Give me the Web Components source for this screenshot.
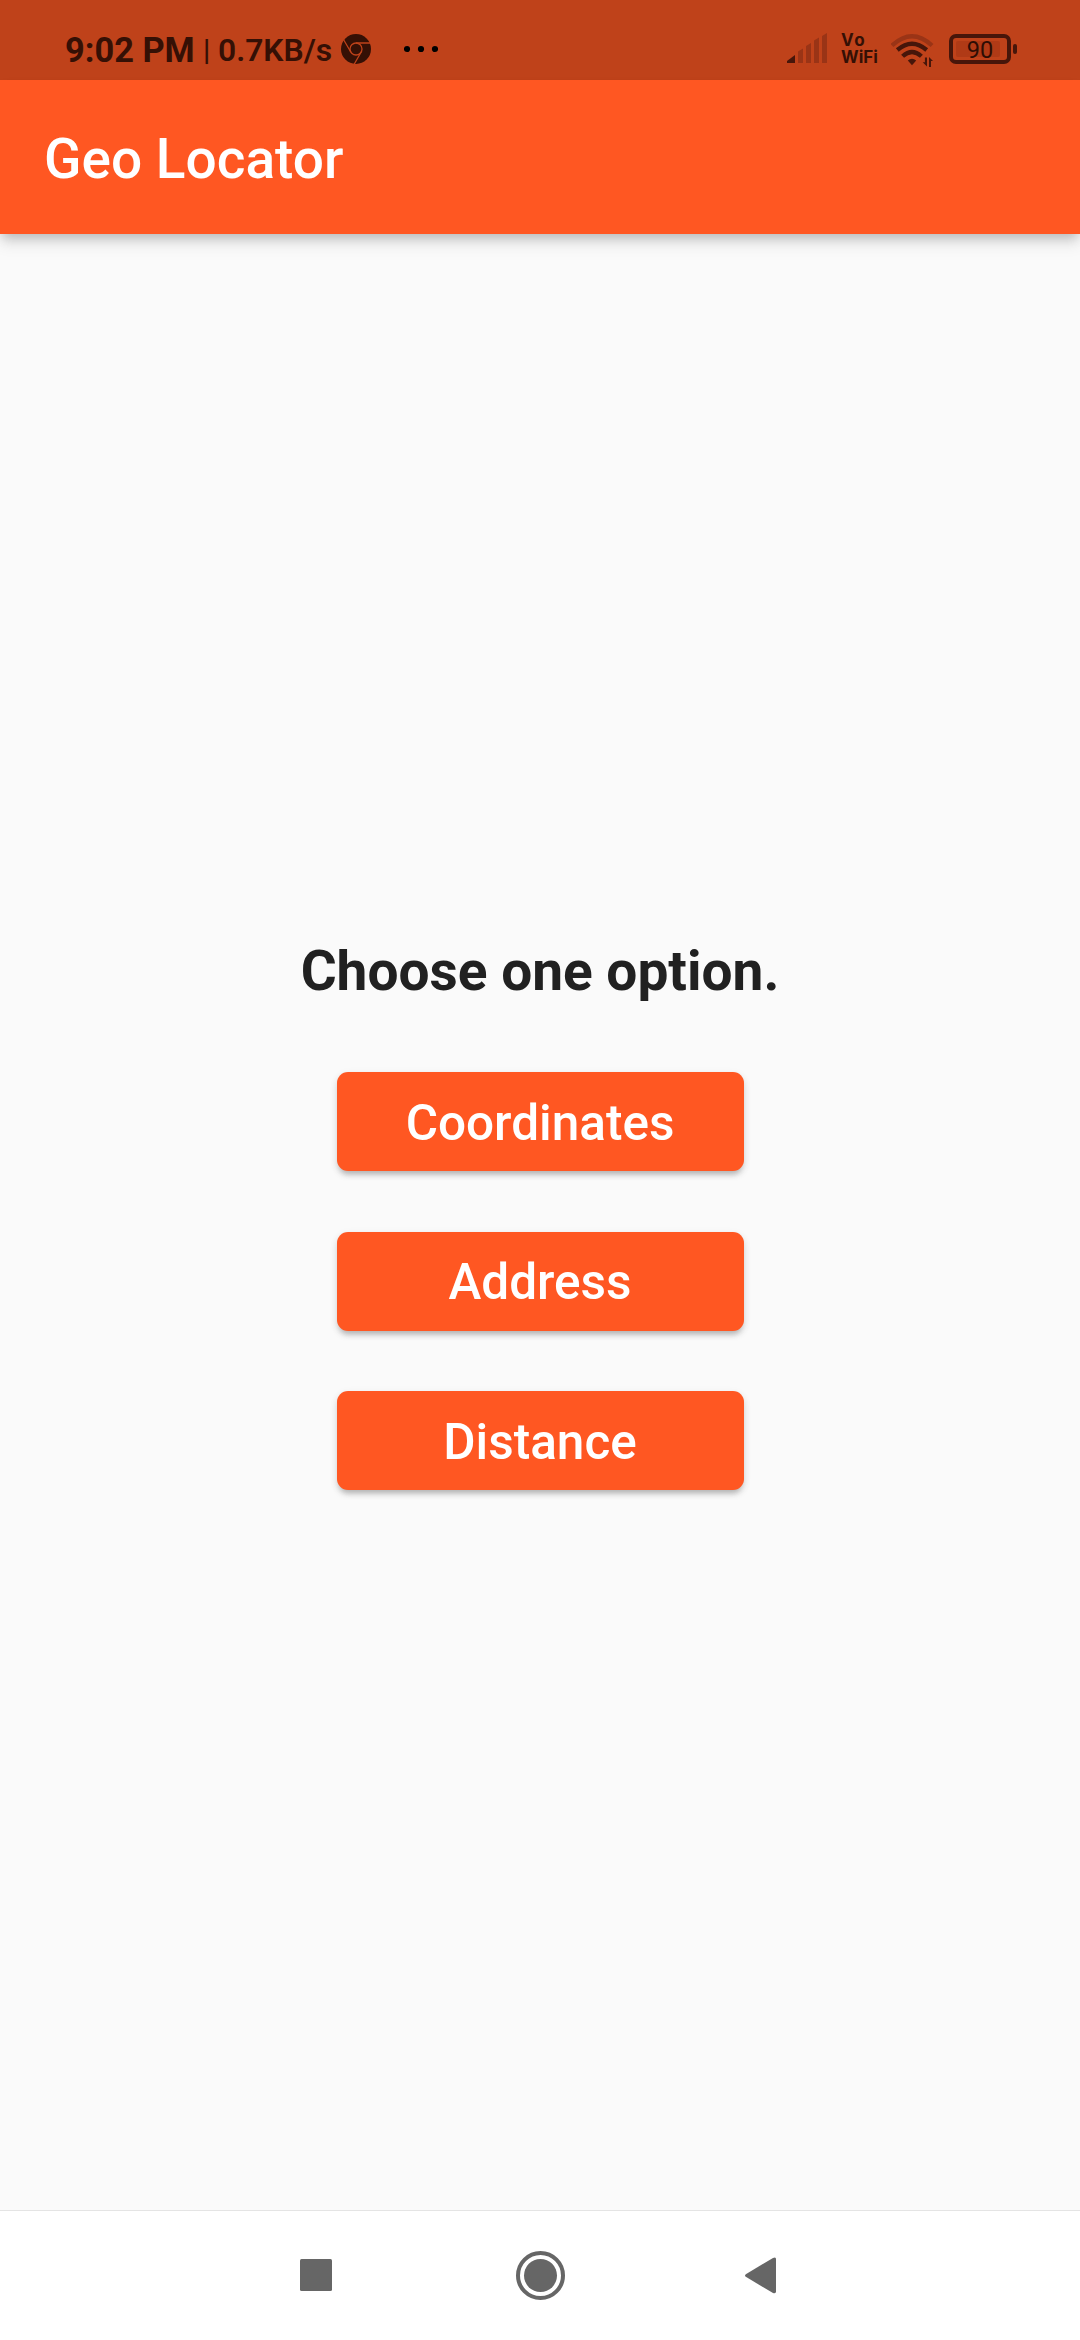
<!DOCTYPE html>
<html lang="en">
<head>
<meta charset="utf-8">
<title>Geo Locator</title>
<style>
html, body { margin: 0; height: 100%; }
body { font-family: Roboto, "Liberation Sans", sans-serif; background: #fafafa; overflow: hidden; }
</style>
</head>
<body>
<geo-screen>
  <status-bar slot="status"></status-bar>
  <app-bar slot="bar">Geo Locator</app-bar>
  <option-title>Choose one option.</option-title>
  <raised-button>Coordinates</raised-button>
  <raised-button>Address</raised-button>
  <raised-button>Distance</raised-button>
  <nav-bar slot="nav"></nav-bar>
</geo-screen>
<script>
const define = (name, html) => {
  const template = document.createElement('template');
  template.innerHTML = html;
  customElements.define(name, class extends HTMLElement {
    constructor() {
      super();
      this.attachShadow({ mode: 'open' }).append(template.content.cloneNode(true));
    }
  });
};

define('status-bar', `
<style>
:host { display: flex; justify-content: space-between; height: 80px; box-sizing: border-box; background: #bf421a; color: #351005; padding: 0 63px 0 65px; }
.side { display: flex; align-items: center; }
svg { display: block; flex: none; }
.time, .bar, .rate { white-space: pre; line-height: 40px; }
.time { font-size: 34.4px; font-weight: 700; width: 138px; padding-top: 20px; }
.bar { font-size: 29px; font-weight: 600; width: 15px; padding-top: 19px; }
.rate { font-size: 31.8px; font-weight: 600; width: 122px; padding-top: 20px; }
.chrome { margin-top: 18px; }
.dots { margin: 18px 0 0 32px; }
.vo { width: 50px; margin-left: 14px; padding-top: 18px; font: 700 17px/17px Inter, sans-serif; }
.vo span { display: block; }
.vo span:first-child { letter-spacing: 1.5px; }
.battery { display: flex; align-items: center; margin-top: 18px; }
.cell { box-sizing: border-box; width: 62px; height: 30px; border: 4px solid #47160a; border-radius: 7px; padding: 3px; }
.fill { width: 44px; height: 16px; background: #b03a16; border-radius: 2px; font-size: 23.5px; line-height: 18px; text-align: center; padding-left: 4px; box-sizing: border-box; color: #2d0d04; }
.nub { width: 4px; height: 10px; border-radius: 2px; background: #47160a; margin-left: 2px; }
</style>
<div class="side">
  <span class="time">9:02 PM</span><span class="bar">|</span><span class="rate">0.7KB/s</span>
  <svg class="chrome" width="32" height="32" viewBox="-16 -16 32 32">
    <circle r="15" fill="#351005"/>
    <g fill="none" stroke="#bf421a" stroke-width="1.3">
      <circle r="6"/><path d="M0-6H14M-5.2 3L-12.5-9.5M5.2 3L-2 15.5"/>
    </g>
  </svg>
  <svg class="dots" width="34" height="8" viewBox="0 0 34 8"><circle cx="3" cy="4" r="3.1"/><circle cx="17" cy="4" r="3.1"/><circle cx="31" cy="4" r="3.1"/></svg>
</div>
<div class="side">
  <svg width="40" height="80" viewBox="786 0 40 80">
    <path fill="#47160a" d="M786 63v-2l8-6v8z"/>
    <path fill="#9a3416" d="M797 63V51.5l5-3V63zM805 63V46l5-3V63zM813 63V40.5l5-3V63zM821 63V36l5-3V63z"/>
  </svg>
  <div class="vo"><span>Vo</span><span>WiFi</span></div>
  <svg width="58" height="80" viewBox="890 0 58 80">
    <g fill="none" stroke-width="4.3">
      <path stroke="#9a3416" d="M891 45.5Q911 27 931 45.5"/>
      <path stroke="#47160a" d="M896.3 50Q911 37.5 925.7 50M901.6 56.3Q911 47.5 920.4 56.3"/>
    </g>
    <path fill="#47160a" d="M906.800 60.500q4.200-3.500 8.400 0L911 65.300z"/>
    <path fill="#47160a" d="M926 57.500V66.500L921.700 62.300h2.200v-4.800zM928 67V57l4 4h-2V67z"/>
  </svg>
  <div class="battery"><div class="cell"><div class="fill">90</div></div><div class="nub"></div></div>
</div>`);

define('app-bar', `
<style>
:host { display: flex; align-items: center; height: 154px; box-sizing: border-box; padding: 4px 44px 0; background: #ff5722; color: #fff; font-size: 55px; font-weight: 500; box-shadow: 0 6px 11px -3px rgba(0,0,0,.22), 0 11px 14px rgba(0,0,0,.08); }
</style><slot></slot>`);

define('option-title', `
<style>
:host { display: block; height: 64px; line-height: 64px; margin-bottom: 8.5px; font-size: 55px; font-weight: 700; color: #212121; white-space: nowrap; }
</style><slot></slot>`);

define('raised-button', `
<style>
:host { display: block; }
button { display: flex; align-items: center; justify-content: center; width: 407px; height: 99px; padding: 2px 0 0; border: 0; border-radius: 11px; background: #ff5722; color: #fff; font: 500 49.5px/58px Roboto, sans-serif; box-shadow: 0 6px 5px -3px rgba(0,0,0,.16), 0 4px 7px rgba(0,0,0,.12), 0 2px 10px rgba(0,0,0,.05); }
</style><button><slot></slot></button>`);

define('nav-bar', `
<style>
:host { display: flex; align-items: center; height: 130px; box-sizing: border-box; padding: 0 0 1px 300px; border-top: 1px solid #e4e4e4; background: #fff; }
svg { display: block; fill: #666; }
.home { margin: 0 178px 0 184px; }
</style>
<svg width="32" height="50" viewBox="0 0 32 50"><rect y="9" width="32" height="32" rx="1.5"/></svg>
<svg class="home" width="50" height="50" viewBox="-24.500 -25.500 50 50"><circle r="22.5" fill="none" stroke="#666" stroke-width="4"/><circle r="16.5"/></svg>
<svg width="32" height="50" viewBox="0 0 32 50"><path d="M1.800 26.800q-1.600-1.300 0-2.600L29 8Q32 6.500 32 9V41.500q0 2.500-3 1.500z"/></svg>`);

define('geo-screen', `
<style>
:host { display: flex; flex-direction: column; height: 2340px; width: 1080px; background: #fafafa; }
main { flex: 1; display: flex; flex-direction: column; align-items: center; gap: 60.5px; padding-top: 705px; box-sizing: border-box; }
</style>
<slot name="status"></slot><slot name="bar"></slot><main><slot></slot></main><slot name="nav"></slot>`);
</script>
</body>
</html>
